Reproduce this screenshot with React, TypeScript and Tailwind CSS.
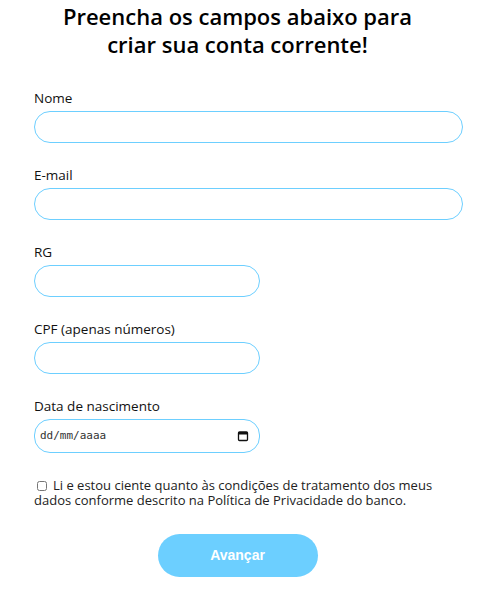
import { FunctionComponent } from "react";

const font = { fontFamily: '"Open Sans", "DejaVu Sans", sans-serif' };

interface FieldProps {
  label: string;
  wide?: boolean;
}

const Field: FunctionComponent<FieldProps> = ({ label, wide }) => {
  return (
    <div className="flex flex-col">
      <label className="text-[13.5px] leading-4 text-[#111] mb-[5px]">{label}</label>
      <input
        className={`h-[32px] ${wide ? "w-[429px]" : "w-[226px]"} rounded-[16px] border border-[#6dcfff] bg-white px-3 outline-none`}
        type="text"
      />
    </div>
  );
};

const App: FunctionComponent = () => {
  return (
    <div className="w-[487px] h-[594px] bg-white" style={font}>
      <h1 className="pt-[2px] pr-[12px] text-center text-[22px] leading-[28px] font-semibold text-black">
        Preencha os campos abaixo para
        <br />
        criar sua conta corrente!
      </h1>
      <form className="flex flex-col gap-[24px] pl-[34px] pt-[32px]">
        <Field label="Nome" wide />
        <Field label="E-mail" wide />
        <Field label="RG" />
        <Field label="CPF (apenas números)" />
        <div className="flex flex-col">
          <label className="text-[13.5px] leading-4 text-[#111] mb-[5px]">Data de nascimento</label>
          <div className="flex h-[34px] w-[226px] items-center justify-between rounded-[16px] border border-[#6dcfff] pl-[5px] pr-[10px]">
            <span className="text-[11px] text-[#333]" style={{ fontFamily: '"DejaVu Sans Mono", monospace' }}>
              dd/mm/aaaa
            </span>
            <svg width="12" height="12" viewBox="0 0 12 12">
              <rect x="1.5" y="2" width="9" height="8.5" rx="1" fill="none" stroke="#111" strokeWidth="1.3" />
              <rect x="1.5" y="2" width="9" height="2.5" fill="#111" />
            </svg>
          </div>
        </div>
      </form>
      <p className="mt-[25px] pl-[34px] pr-[40px] text-[13px] leading-[15px] text-[#222]">
        <input type="checkbox" className="mr-[6px] ml-[3px] h-[10px] w-[10px] align-[-1px]" />
        Li e estou ciente quanto às condições de tratamento dos meus dados conforme descrito na Política de Privacidade do banco.
      </p>
      <div className="flex justify-center pr-[12px] mt-[26px]">
        <button
          className="h-[43px] w-[160px] rounded-full bg-[#6ccfff] text-[14px] font-bold text-white"
          style={{ fontFamily: '"Liberation Sans", Arial, sans-serif' }}
        >
          Avançar
        </button>
      </div>
    </div>
  );
};

export default App;
